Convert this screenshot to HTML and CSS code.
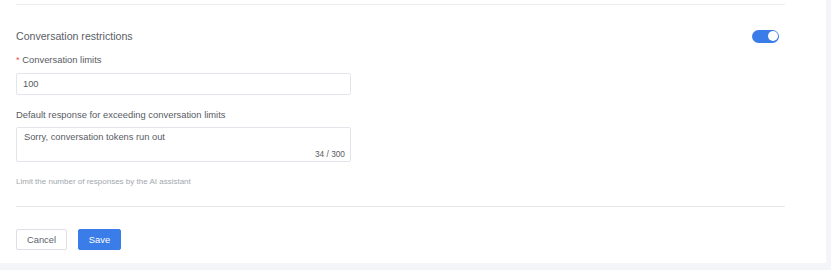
FILE: index.html
```html
<!DOCTYPE html>
<html>
<head>
<meta charset="utf-8">
<link rel="stylesheet" href="styles.css">
</head>
<body>
<div class="panel">
  <div class="content">
    <div class="top-divider"></div>
    <div class="section-head">
      <span class="section-title">Conversation restrictions</span>
      <span class="switch"><span class="knob"></span></span>
    </div>
    <div class="field">
      <div class="label"><span class="req">*</span> Conversation limits</div>
      <div class="input">100</div>
    </div>
    <div class="field field-2">
      <div class="label">Default response for exceeding conversation limits</div>
      <div class="textarea">
        <div class="ta-text">Sorry, conversation tokens run out</div>
        <div class="counter">34 / 300</div>
      </div>
    </div>
    <div class="hint">Limit the number of responses by the AI assistant</div>
    <div class="bottom-divider"></div>
    <div class="actions">
      <button class="btn btn-cancel">Cancel</button>
      <button class="btn btn-save">Save</button>
    </div>
  </div>
</div>
</body>
</html>
```

FILE: styles.css
```css
html, body {
  margin: 0;
  padding: 0;
}
body {
  background: #f4f5f9;
  font-family: "Liberation Sans", Arial, sans-serif;
  width: 831px;
  height: 270px;
  overflow: hidden;
}
.panel {
  width: 826px;
  height: 263px;
  background: #ffffff;
  box-sizing: border-box;
  padding: 4px 41px 0 16px;
}
.content {
  display: flex;
  flex-direction: column;
}
.top-divider {
  height: 1px;
  background: #ececef;
}
.section-head {
  display: flex;
  justify-content: space-between;
  align-items: center;
  margin-top: 24px;
  height: 14px;
}
.section-title {
  font-size: 10.6px;
  color: #5a5e66;
}
.switch {
  width: 27px;
  height: 13px;
  border-radius: 7px;
  background: #3a7ce8;
  margin-right: 6px;
  display: flex;
  align-items: center;
  justify-content: flex-end;
  box-sizing: border-box;
  padding-right: 1.5px;
}
.knob {
  width: 10px;
  height: 10px;
  border-radius: 50%;
  background: #ffffff;
}
.field {
  display: flex;
  flex-direction: column;
  width: 335px;
  margin-top: 10px;
}
.label {
  font-size: 9.4px;
  color: #575b63;
  line-height: 13px;
}
.req {
  color: #f0594f;
}
.input {
  margin-top: 7px;
  height: 22px;
  box-sizing: border-box;
  border: 1px solid #e3e5ea;
  border-radius: 2px;
  font-size: 9.3px;
  color: #575b63;
  padding: 0 6px;
  line-height: 20px;
}
.field-2 {
  margin-top: 13px;
}
.textarea {
  margin-top: 6px;
  height: 35px;
  box-sizing: border-box;
  border: 1px solid #e3e5ea;
  border-radius: 2px;
  padding: 3px 5px 0 7px;
  display: flex;
  flex-direction: column;
}
.ta-text {
  font-size: 9.3px;
  color: #575b63;
  line-height: 13px;
}
.counter {
  font-size: 8.3px;
  color: #575b63;
  text-align: right;
  margin-top: 5px;
  line-height: 11px;
}
.hint {
  margin-top: 14px;
  font-size: 8px;
  color: #a3a7ae;
  line-height: 11px;
}
.bottom-divider {
  height: 1px;
  background: #e7e8ec;
  margin-top: 19px;
}
.actions {
  display: flex;
  gap: 11px;
  margin-top: 22px;
}
.btn {
  height: 21px;
  box-sizing: border-box;
  border-radius: 2px;
  font-family: "Liberation Sans", Arial, sans-serif;
  font-size: 9.4px;
  padding: 0;
  cursor: pointer;
}
.btn-cancel {
  width: 51px;
  background: #ffffff;
  border: 1px solid #dcdfe5;
  color: #606470;
}
.btn-save {
  width: 43px;
  background: #3a7ce8;
  border: 1px solid #3a7ce8;
  color: #ffffff;
}
```
